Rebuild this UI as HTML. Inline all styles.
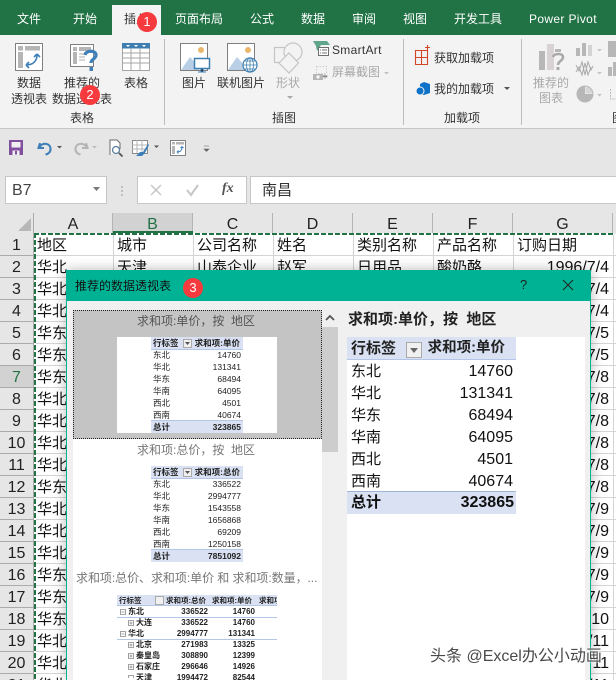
<!DOCTYPE html>
<html lang="zh-CN"><head><meta charset="utf-8"><style>
html{margin:0;padding:0;width:616px;height:680px;overflow:hidden}
body{margin:0;padding:0;width:616px;height:680px;overflow:hidden;position:relative;background:#fff;font-family:"Liberation Sans","Noto Sans CJK SC",sans-serif;color:#222}
div,span,svg{position:absolute;box-sizing:border-box}
.t{white-space:nowrap;font-size:12px;line-height:16px;color:#333}
.tab{color:#fff;top:11px}
.c{text-align:center;transform:translateX(-50%)}
.g{color:#a9a9a9}
.s{white-space:nowrap;font-size:15px;line-height:23px;color:#111}
.d{font-size:16px}
.n{font-size:16px;line-height:23px;color:#222;left:0;width:33px;text-align:center;background:#e6e6e6;border-bottom:1px solid #ababab;height:22px}
.h{font-size:16px;line-height:24px;text-align:center;top:213px;height:20px;border-right:1px solid #b4b4b4;color:#222}
.v{width:1px;top:234px;height:446px;background:#d4d4d4}
.hl{left:34px;width:582px;height:1px;background:#d4d4d4}
.bd{width:20px;height:20px;border-radius:50%;background:#f63a3d;color:#fff;font-size:13px;line-height:20px;text-align:center;font-weight:400}
.th{white-space:nowrap;font-size:8.5px;line-height:12px;color:#222}
.m{font-size:8px;font-weight:700}
.mh{font-size:7.5px;font-weight:700;line-height:13px;top:-1px}
</style></head><body>
<!-- title/tabs -->
<div style="left:0;top:0;width:616px;height:35px;background:#217346"></div>
<div style="left:112px;top:5px;width:49px;height:30px;background:#f3f3f3"></div>
<span class="t tab" style="left:17px">文件</span>
<span class="t tab" style="left:73px">开始</span>
<span class="t" style="left:124px;top:11px">插入</span>
<span class="t tab" style="left:175px">页面布局</span>
<span class="t tab" style="left:250px">公式</span>
<span class="t tab" style="left:301px">数据</span>
<span class="t tab" style="left:352px">审阅</span>
<span class="t tab" style="left:403px">视图</span>
<span class="t tab" style="left:454px">开发工具</span>
<span class="t tab" style="left:529px;letter-spacing:.35px">Power Pivot</span>
<!-- ribbon -->
<div style="left:0;top:35px;width:616px;height:94px;background:#f3f3f3;border-bottom:1px solid #c6c6c6"></div>
<div style="left:164px;top:39px;width:1px;height:86px;background:#bdbdbd"></div>
<div style="left:403px;top:39px;width:1px;height:86px;background:#bdbdbd"></div>
<div style="left:521px;top:39px;width:1px;height:86px;background:#bdbdbd"></div>

<svg style="left:0;top:36px" width="616" height="92" viewBox="0 36 616 92">
 <rect x="15.5" y="43.5" width="27" height="27" fill="#fff" stroke="#7f7f7f"/>
 <rect x="18" y="46" width="5" height="4.5" fill="#b5b5b5"/><rect x="25" y="46" width="15" height="4.5" fill="#b5b5b5"/><rect x="18" y="52" width="5" height="16" fill="#b5b5b5"/>
 <path d="M26 65c6 0 11-3 11-10M26 65l3-3M26 65l3 3M37 54l-3 3M37 54l3 3" fill="none" stroke="#3f7fb9" stroke-width="1.6"/>
 <rect x="70.5" y="44.5" width="23" height="22" fill="#fff" stroke="#7f7f7f"/>
 <rect x="73" y="47" width="4" height="4" fill="#b5b5b5"/><rect x="79" y="47" width="12" height="4" fill="#b5b5b5"/><rect x="73" y="52" width="4" height="12" fill="#b5b5b5"/><path d="M79 54h8M79 57h6M79 60h6" stroke="#c9c9c9" stroke-width="1.5"/>
 <path d="M85 55c1-5 11-5 11 0 0 4-5 4-5 8" fill="none" stroke="#3f7fb9" stroke-width="3.2"/><rect x="89.5" y="67" width="3.5" height="4" fill="#3f7fb9"/>
 <rect x="122.5" y="47" width="27" height="23.5" fill="#fff" stroke="#a5a5a5"/>
 <rect x="122" y="43" width="28" height="5.5" fill="#3f7fb0"/>
 <path d="M126 45h4l-2 2zM134 45h4l-2 2zM142 45h4l-2 2z" fill="#fff"/>
 <path d="M122 53h28M122 58h28M122 63h28M131 48v22M140 48v22" stroke="#a5a5a5"/>
 <rect x="180.5" y="43.5" width="27" height="27" fill="#fff" stroke="#7f7f7f"/>
 <circle cx="201" cy="50" r="3" fill="#e8b76b"/><path d="M181 70l9-13 7 8 2 5z" fill="#b9cfe6"/>
 <rect x="194.5" y="58.5" width="15" height="10" fill="#fff" stroke="#3f7fb0" stroke-width="1.5"/><path d="M201 69h2v3h-2zM198 72h8" stroke="#3f7fb0"/>
 <rect x="227.5" y="43.5" width="27" height="27" fill="#fff" stroke="#7f7f7f"/>
 <circle cx="248" cy="50" r="3" fill="#e8b76b"/><path d="M228 70l9-13 7 8 2 5z" fill="#b9cfe6"/>
 <circle cx="250" cy="65" r="7" fill="#fff" stroke="#3f7fb0" stroke-width="1.2"/><path d="M243 65h14M250 58v14M245 61h10M245 69h10" stroke="#3f7fb0" stroke-width=".8"/><ellipse cx="250" cy="65" rx="3.5" ry="7" fill="none" stroke="#3f7fb0" stroke-width=".8"/>
 <rect x="274.5" y="47.5" width="14" height="15" fill="none" stroke="#c4c4c4" stroke-width="1.2"/><circle cx="293" cy="52" r="9" fill="#f3f3f3" stroke="#c4c4c4" stroke-width="1.2"/>
 <path d="M289 53l9.5 10-9.5 10-10-10z" fill="#f3f3f3" stroke="#c4c4c4" stroke-width="1.2"/>
 <path d="M287 96h6l-3 3z" fill="#a9a9a9"/>
 <path d="M313 41h14l3 4h-9l-4 6-1-5z" fill="#5fa68a"/><rect x="318.5" y="47.5" width="10" height="8" fill="#fff" stroke="#6f6f6f"/><path d="M320 50h1M322 50h5M320 53h1M322 53h5" stroke="#6f6f6f"/>
 <rect x="316.5" y="66.5" width="10" height="7" fill="none" stroke="#ccc" stroke-dasharray="1.5 1.5"/>
 <path d="M313 74h10v6h-10z" fill="#b5b5b5"/><circle cx="318" cy="77" r="1.7" fill="#f3f3f3"/><path d="M323 75.5h4v1.5h-4zM325 74v5" stroke="#b5b5b5"/>
 <path d="M384 72h5l-2.5 2.500z" fill="#c0c0c0"/>
 <path d="M415.500 50.500h12v14h-12zM415.500 57.500h12M421.500 50v14M425 47.500h5M427.500 45v5" fill="none" stroke="#d24726" stroke-width="1.1"/>
 <path d="M424 82l6 2v9l-6 2-4-1v-10z" fill="#0e72c9"/><circle cx="420" cy="91" r="4" fill="#0e72c9" stroke="#f3f3f3"/>
 <path d="M504 87h6l-3 3z" fill="#555"/>
 <rect x="539" y="51" width="6" height="19" fill="#b7b7b7"/><rect x="547" y="44" width="7" height="26" fill="#d8d2d4"/><rect x="555" y="49" width="6" height="3" fill="#b7b7b7"/>
 <path d="M553 57c1-4 10-4 10 0 0 4-5 4-5 8" fill="none" stroke="#a9a9a9" stroke-width="2.6"/><rect x="556.5" y="67" width="3" height="3" fill="#a9a9a9"/>
 <rect x="576" y="48" width="4" height="8" fill="#b7b7b7"/><rect x="582" y="43" width="4" height="13" fill="#b7b7b7"/><rect x="588" y="45" width="4" height="11" fill="#d3d3d3"/>
 <path d="M597 49h5l-2.5 2.5zM597 72h5l-2.5 2.5zM597 94h5l-2.5 2.5z" fill="#c4c4c4"/>
 <path d="M576 65l3 6 3-9 3 13 3-13 3 8 2-4M576 72l3-5 3 8 3-12 3 12 3-8" fill="none" stroke="#a9a9a9"/>
 <path d="M585 86a8 8 0 1 0 8 8h-8z" fill="#b7b7b7"/><path d="M585.5 86v7.500h7.500a8 8 0 0 0-7.500-7.500z" fill="#d6d6d6"/><circle cx="585" cy="94" r="8" fill="none" stroke="#b7b7b7"/>
 <rect x="608" y="41" width="8" height="16" fill="#b7b7b7"/><rect x="608" y="67" width="4" height="9" fill="#b7b7b7"/><rect x="613" y="62" width="3" height="14" fill="#b7b7b7"/>
 <path d="M610.5 89v10h5.5" fill="none" stroke="#bcbcbc" stroke-dasharray="2 1"/>
</svg>

<span class="t c" style="left:29px;top:75px">数据</span>
<span class="t c" style="left:29px;top:91px">透视表</span>
<span class="t c" style="left:82px;top:75px">推荐的</span>
<span class="t c" style="left:82px;top:91px">数据透视表</span>
<span class="t c" style="left:136px;top:75px">表格</span>
<span class="t c" style="left:82px;top:110px">表格</span>
<span class="t c" style="left:194px;top:75px">图片</span>
<span class="t c" style="left:241px;top:75px">联机图片</span>
<span class="t c g" style="left:288px;top:75px">形状</span>
<span class="t c" style="left:284px;top:110px">插图</span>
<span class="t" style="left:332px;top:42px;letter-spacing:.3px">SmartArt</span>
<span class="t g" style="left:332px;top:64px">屏幕截图</span>
<span class="t" style="left:434px;top:50px">获取加载项</span>
<span class="t" style="left:434px;top:81px">我的加载项</span>
<span class="t c" style="left:462px;top:110px">加载项</span>
<span class="t c g" style="left:551px;top:75px">推荐的</span>
<span class="t c g" style="left:551px;top:90px">图表</span>
<span class="t" style="left:612px;top:110px">图</span>

<!-- QAT -->
<div style="left:0;top:129px;width:616px;height:85px;background:#e6e6e6"></div>
<svg style="left:0;top:130px" width="240" height="40" viewBox="0 130 240 40">
 <path d="M9 140h14v15H9z" fill="#80509f"/><rect x="11.5" y="142" width="9" height="5.5" fill="#f0f0f0"/><rect x="12.5" y="150.5" width="7" height="4.5" fill="#f0f0f0"/><rect x="15" y="151" width="2" height="3.5" fill="#80509f"/>
 <path d="M40 143l-1.500 5 5.500 0M39.500 147c3-5 11-4 11 2 0 3-2 5-5 5.500" fill="none" stroke="#3f7fb9" stroke-width="2.1"/>
 <path d="M57 146h5l-2.5 2.500z" fill="#555"/>
 <path d="M86 143l1.500 5-5.500 0M86.500 147c-3-5-11-4-11 2 0 3 2 5 5 5.500" fill="none" stroke="#b5b5b5" stroke-width="2.1"/>
 <path d="M92 146h5l-2.5 2.500z" fill="#bbb"/>
 <path d="M110 155v-15h7l3 3v6" fill="#fff" stroke="#6a6a6a"/><circle cx="116" cy="150" r="3.5" fill="#fff" stroke="#5b7f9e" stroke-width="1.3"/><path d="M119 153l3.500 3.500" stroke="#555" stroke-width="1.8"/>
 <rect x="132.5" y="140.5" width="15" height="13" fill="#fff" stroke="#8a8a8a"/><path d="M132 145h15M132 149h15M137 140v13M142 140v13" stroke="#b5b5b5"/><path d="M136 156l4-4 3 0 5-8 1 1-4 8-3 3z" fill="#3f7fb9"/>
 <path d="M154 145.500h5l-2.5 2.500z" fill="#555"/>
 <rect x="170.5" y="140.5" width="15" height="15" fill="#fff" stroke="#7f7f7f"/><rect x="172" y="142" width="3" height="2.5" fill="#b5b5b5"/><rect x="176" y="142" width="8" height="2.5" fill="#b5b5b5"/><rect x="172" y="146" width="3" height="8" fill="#b5b5b5"/><path d="M177 152c3 0 5-1 5-5M177 152l1.500-1.500M177 152l1.500 1.500M182 146.500l-1.500 1.500M182 146.500l1.500 1.500" stroke="#3f7fb9" fill="none"/>
 <path d="M204 146h5M204 149h5l-2.500 2.500z" fill="#666" stroke="#666" stroke-width=".6"/>
</svg>

<!-- formula bar -->
<div style="left:5px;top:176px;width:102px;height:28px;background:#fff;border:1px solid #c6c6c6"></div>
<span class="s d" style="left:12px;top:179px;color:#444">B7</span>
<svg style="left:0;top:170px" width="136" height="36" viewBox="0 170 136 36">
 <path d="M93 187h7l-3.500 4z" fill="#777"/>
 <path d="M122 186v2M122 190v2M122 194v2" stroke="#aaa" stroke-width="1.3"/>
</svg>
<div style="left:137px;top:176px;width:110px;height:28px;background:#fff;border:1px solid #c6c6c6"></div>
<svg style="left:137px;top:176px" width="110" height="28"><path d="M14 9l10 10M24 9l-10 10" stroke="#c6c6c6" stroke-width="1.5"/><path d="M50 14l4 5 7-10" fill="none" stroke="#c6c6c6" stroke-width="2"/></svg>
<span style="left:222px;top:181px;font:italic 700 14px 'Liberation Serif',serif;color:#555;line-height:16px">fx</span>
<div style="left:250px;top:176px;width:366px;height:28px;background:#fff;border:1px solid #c6c6c6;border-right:0"></div>
<span class="s" style="left:262px;top:179px;color:#333">南昌</span>

<!-- grid -->
<div style="left:0;top:204px;width:616px;height:10px;background:#e6e6e6"></div>
<div style="left:0;top:213px;width:616px;height:21px;background:#e6e6e6"></div>
<div style="left:0;top:233px;width:34px;height:447px;background:#e6e6e6"></div>
<svg style="left:18px;top:218px" width="14" height="14"><path d="M13 0v13H0z" fill="#b7b7b7"/></svg>
<div class="h" style="left:34px;width:79px">A</div>
<div class="h" style="left:113px;width:80px;background:#d2d2d2;color:#217346">B</div>
<div style="left:113px;top:231px;width:80px;height:2px;background:#217346"></div>
<div class="h" style="left:193px;width:80px">C</div>
<div class="h" style="left:273px;width:80px">D</div>
<div class="h" style="left:353px;width:80px">E</div>
<div class="h" style="left:433px;width:80px">F</div>
<div class="h" style="left:513px;width:100px">G</div>
<div class="v" style="left:113px"></div><div class="v" style="left:193px"></div><div class="v" style="left:273px"></div><div class="v" style="left:353px"></div><div class="v" style="left:433px"></div><div class="v" style="left:513px"></div><div class="v" style="left:613px"></div>
<div class="hl" style="top:255px"></div><div class="hl" style="top:277px"></div><div class="hl" style="top:299px"></div><div class="hl" style="top:321px"></div><div class="hl" style="top:343px"></div><div class="hl" style="top:365px"></div><div class="hl" style="top:387px"></div><div class="hl" style="top:409px"></div><div class="hl" style="top:431px"></div><div class="hl" style="top:453px"></div><div class="hl" style="top:475px"></div><div class="hl" style="top:497px"></div><div class="hl" style="top:519px"></div><div class="hl" style="top:541px"></div><div class="hl" style="top:563px"></div><div class="hl" style="top:585px"></div><div class="hl" style="top:607px"></div><div class="hl" style="top:629px"></div><div class="hl" style="top:651px"></div><div class="hl" style="top:673px"></div>

<div class="n" style="top:234px">1</div><div class="n" style="top:256px">2</div><div class="n" style="top:278px">3</div><div class="n" style="top:300px">4</div><div class="n" style="top:322px">5</div><div class="n" style="top:344px">6</div>
<div class="n" style="top:366px;background:#d2d2d2;color:#217346">7</div>
<div class="n" style="top:388px">8</div><div class="n" style="top:410px">9</div><div class="n" style="top:432px">10</div><div class="n" style="top:454px">11</div><div class="n" style="top:476px">12</div><div class="n" style="top:498px">13</div><div class="n" style="top:520px">14</div><div class="n" style="top:542px">15</div><div class="n" style="top:564px">16</div><div class="n" style="top:586px">17</div><div class="n" style="top:608px">18</div><div class="n" style="top:630px">19</div><div class="n" style="top:652px">20</div><div class="n" style="top:674px">21</div>
<div style="left:33px;top:213px;width:1px;height:467px;background:#ababab"></div>

<span class="s" style="left:37px;top:234px">地区</span>
<span class="s" style="left:117px;top:234px">城市</span>
<span class="s" style="left:197px;top:234px">公司名称</span>
<span class="s" style="left:277px;top:234px">姓名</span>
<span class="s" style="left:357px;top:234px">类别名称</span>
<span class="s" style="left:437px;top:234px">产品名称</span>
<span class="s" style="left:517px;top:234px">订购日期</span>
<span class="s" style="left:37px;top:256px">华北</span>
<span class="s" style="left:117px;top:256px">天津</span>
<span class="s" style="left:197px;top:256px">山泰企业</span>
<span class="s" style="left:277px;top:256px">赵军</span>
<span class="s" style="left:357px;top:256px">日用品</span>
<span class="s" style="left:437px;top:256px">酸奶酪</span>
<span class="s d" style="right:7px;top:256px">1996/7/4</span>
<span class="s" style="left:37px;top:278px">华北</span><span class="s" style="left:37px;top:300px">华北</span><span class="s" style="left:37px;top:322px">华东</span><span class="s" style="left:37px;top:344px">华东</span><span class="s" style="left:37px;top:366px">华东</span><span class="s" style="left:37px;top:388px">华北</span><span class="s" style="left:37px;top:410px">华北</span><span class="s" style="left:37px;top:432px">华北</span><span class="s" style="left:37px;top:454px">华北</span><span class="s" style="left:37px;top:476px">华东</span><span class="s" style="left:37px;top:498px">华北</span><span class="s" style="left:37px;top:520px">华北</span><span class="s" style="left:37px;top:542px">华北</span><span class="s" style="left:37px;top:564px">华东</span><span class="s" style="left:37px;top:586px">华东</span><span class="s" style="left:37px;top:608px">华东</span><span class="s" style="left:37px;top:630px">华北</span><span class="s" style="left:37px;top:652px">华北</span><span class="s" style="left:37px;top:674px">华北</span>

<span class="s d" style="right:7px;top:278px">1996/7/4</span><span class="s d" style="right:7px;top:300px">1996/7/4</span><span class="s d" style="right:7px;top:322px">1996/7/5</span><span class="s d" style="right:7px;top:344px">1996/7/5</span><span class="s d" style="right:7px;top:366px">1996/7/8</span><span class="s d" style="right:7px;top:388px">1996/7/8</span><span class="s d" style="right:7px;top:410px">1996/7/8</span><span class="s d" style="right:7px;top:432px">1996/7/8</span><span class="s d" style="right:7px;top:454px">1996/7/8</span><span class="s d" style="right:7px;top:476px">1996/7/8</span><span class="s d" style="right:7px;top:498px">1996/7/9</span><span class="s d" style="right:7px;top:520px">1996/7/9</span><span class="s d" style="right:7px;top:542px">1996/7/9</span><span class="s d" style="right:7px;top:564px">1996/7/9</span><span class="s d" style="right:7px;top:586px">1996/7/9</span><span class="s d" style="right:7px;top:608px">1996/7/10</span><span class="s d" style="right:7px;top:630px">1996/7/11</span><span class="s d" style="right:7px;top:652px">1996/7/11</span><span class="s d" style="right:7px;top:674px">1996/7/11</span>

<!-- marching ants -->
<div style="left:34px;top:233px;width:580px;height:2px;background:repeating-linear-gradient(90deg,#217346 0 5px,#fff 5px 7px)"></div>
<div style="left:34px;top:233px;width:2px;height:447px;background:repeating-linear-gradient(180deg,#217346 0 5px,#fff 5px 7px)"></div>

<!-- dialog -->
<div style="left:66px;top:270px;width:525px;height:410px;background:#f0f0f0;border:1px solid #00b294;border-bottom:0;box-shadow:0 0 12px rgba(0,0,0,.28)"></div>
<div style="left:66px;top:270px;width:525px;height:31px;background:#00b294"></div>
<span class="t" style="left:75px;top:278px;color:#111">推荐的数据透视表</span>
<span style="left:520px;top:277px;font-size:13px;line-height:16px;color:#222">?</span>
<svg style="left:562px;top:279px" width="12" height="12"><path d="M1 1l10 10M11 1L1 11" stroke="#222" stroke-width="1"/></svg>

<!-- list -->
<div style="left:73px;top:310px;width:249px;height:370px;background:#fff"></div>
<div style="left:322px;top:310px;width:17px;height:370px;background:#f0f0f0"></div>
<div style="left:322px;top:327px;width:16px;height:125px;background:#cdcdcd"></div>
<svg style="left:325px;top:314px" width="10" height="8"><path d="M1 6l4-4 4 4" fill="none" stroke="#555" stroke-width="1.8"/></svg>
<div style="left:73px;top:310px;width:249px;height:129px;background:#c4c4c4;border:1px dotted #222"></div>
<span class="t c" style="left:196px;top:313px;color:#555">求和项:单价，按&nbsp; 地区</span>
<div style="left:117px;top:337px;width:160px;height:96px;background:#fff"></div>

<div style="left:151px;top:337px;width:92px;height:13px;background:#d9e1f2;border-bottom:1px solid #b4c6e7"></div>
<span class="th" style="left:153px;top:337px;font-weight:700">行标签</span>
<div style="left:183px;top:339px;width:9px;height:9px;background:#f0f0f0;border:1px solid #aaa"></div>
<svg style="left:185px;top:342px" width="5" height="3"><path d="M0 0h5l-2.5 3z" fill="#555"/></svg>
<span class="th" style="right:376px;top:337px;font-weight:700">求和项:单价</span>
<span class="th" style="left:153px;top:349px">东北</span><span class="th" style="right:375px;top:349px">14760</span>
<span class="th" style="left:153px;top:361px">华北</span><span class="th" style="right:375px;top:361px">131341</span>
<span class="th" style="left:153px;top:373px">华东</span><span class="th" style="right:375px;top:373px">68494</span>
<span class="th" style="left:153px;top:385px">华南</span><span class="th" style="right:375px;top:385px">64095</span>
<span class="th" style="left:153px;top:397px">西北</span><span class="th" style="right:375px;top:397px">4501</span>
<span class="th" style="left:153px;top:409px">西南</span><span class="th" style="right:375px;top:409px">40674</span>
<div style="left:151px;top:420px;width:92px;height:13px;background:#d9e1f2;border-top:1px solid #b4c6e7"></div>
<span class="th" style="left:153px;top:421px;font-weight:700">总计</span><span class="th" style="right:375px;top:421px;font-weight:700">323865</span>

<span class="t c" style="left:196px;top:442px;color:#777">求和项:总价，按&nbsp; 地区</span>
<div style="left:151px;top:466px;width:92px;height:13px;background:#d9e1f2;border-bottom:1px solid #b4c6e7"></div>
<span class="th" style="left:153px;top:466px;font-weight:700">行标签</span>
<div style="left:183px;top:468px;width:9px;height:9px;background:#f0f0f0;border:1px solid #aaa"></div>
<svg style="left:185px;top:471px" width="5" height="3"><path d="M0 0h5l-2.5 3z" fill="#555"/></svg>
<span class="th" style="right:376px;top:466px;font-weight:700">求和项:总价</span>
<span class="th" style="left:153px;top:478px">东北</span><span class="th" style="right:375px;top:478px">336522</span>
<span class="th" style="left:153px;top:490px">华北</span><span class="th" style="right:375px;top:490px">2994777</span>
<span class="th" style="left:153px;top:502px">华东</span><span class="th" style="right:375px;top:502px">1543558</span>
<span class="th" style="left:153px;top:514px">华南</span><span class="th" style="right:375px;top:514px">1656868</span>
<span class="th" style="left:153px;top:526px">西北</span><span class="th" style="right:375px;top:526px">69209</span>
<span class="th" style="left:153px;top:538px">西南</span><span class="th" style="right:375px;top:538px">1250158</span>
<div style="left:151px;top:549px;width:92px;height:13px;background:#d9e1f2;border-top:1px solid #b4c6e7"></div>
<span class="th" style="left:153px;top:550px;font-weight:700">总计</span><span class="th" style="right:375px;top:550px;font-weight:700">7851092</span>

<span class="t" style="left:76px;top:570px;color:#777;letter-spacing:-.05px">求和项:总价、求和项:单价 和 求和项:数量，...</span>

<div style="left:117px;top:595px;width:160px;height:85px;overflow:hidden;background:#fff">
 <div style="left:0;top:0;width:160px;height:11px;background:#d9e1f2;border-bottom:1px solid #b4c6e7"></div>
 <span class="th mh" style="left:2px">行标签</span>
 <div style="left:38px;top:1px;width:9px;height:9px;background:#f0f0f0;border:1px solid #aaa"></div>
 <span class="th mh" style="left:49px">求和项:总价</span>
 <span class="th mh" style="left:95px">求和项:单价</span>
 <span class="th mh" style="left:142px">求和项:数量</span>
 <span class="th m" style="left:11px;top:11px">东北</span><span class="th m" style="right:69px;top:11px">336522</span><span class="th m" style="right:22px;top:11px">14760</span>
 <div style="left:0;top:22px;width:160px;height:1px;background:#b4c6e7"></div>
 <span class="th m" style="left:19px;top:22px">大连</span><span class="th m" style="right:69px;top:22px">336522</span><span class="th m" style="right:22px;top:22px">14760</span>
 <span class="th m" style="left:11px;top:33px">华北</span><span class="th m" style="right:69px;top:33px">2994777</span><span class="th m" style="right:22px;top:33px">131341</span>
 <div style="left:0;top:44px;width:160px;height:1px;background:#b4c6e7"></div>
 <span class="th m" style="left:19px;top:44px">北京</span><span class="th m" style="right:69px;top:44px">271983</span><span class="th m" style="right:22px;top:44px">13325</span>
 <span class="th m" style="left:19px;top:55px">秦皇岛</span><span class="th m" style="right:69px;top:55px">308890</span><span class="th m" style="right:22px;top:55px">12399</span>
 <span class="th m" style="left:19px;top:66px">石家庄</span><span class="th m" style="right:69px;top:66px">296646</span><span class="th m" style="right:22px;top:66px">14926</span>
 <span class="th m" style="left:19px;top:77px">天津</span><span class="th m" style="right:69px;top:77px">1994472</span><span class="th m" style="right:22px;top:77px">82544</span>
 <svg style="left:3px;top:13px" width="15" height="70" fill="none" stroke="#888" stroke-width=".8">
  <path d="M.5 1.5h5v5h-5zM1.5 4h3M8.5 12.5h5v5h-5zM9.5 15h3M11 13.5v3M.5 23.5h5v5h-5zM1.5 26h3M8.5 34.5h5v5h-5zM9.5 37h3M11 35.5v3M8.5 45.5h5v5h-5zM9.5 48h3M11 46.5v3M8.5 56.5h5v5h-5zM9.5 59h3M11 57.5v3M8.5 67.5h5v5h-5z"/>
 </svg>
</div>

<!-- preview -->
<span style="left:348px;top:311px;white-space:nowrap;font-size:15px;line-height:18px;font-weight:700;color:#222">求和项:单价，按&nbsp; 地区</span>
<div style="left:347px;top:337px;width:238px;height:343px;background:#fff"></div>
<div style="left:347px;top:337px;width:169px;height:23px;background:#d9e1f2;border-bottom:1px solid #b4c6e7"></div>
<span class="s" style="left:351px;top:337px;font-weight:700;color:#222">行标签</span>
<div style="left:406px;top:342px;width:16px;height:16px;background:#f0f0f0;border:1px solid #aaa"></div>
<svg style="left:410px;top:348px" width="8" height="5"><path d="M0 0h8l-4 5z" fill="#666"/></svg>
<span class="s" style="right:111px;top:337px;font-weight:700;color:#222;font-size:14.5px">求和项:单价</span>
<span class="s" style="left:351px;top:360px">东北</span><span class="s d" style="right:103px;top:360px">14760</span>
<span class="s" style="left:351px;top:382px">华北</span><span class="s d" style="right:103px;top:382px">131341</span>
<span class="s" style="left:351px;top:404px">华东</span><span class="s d" style="right:103px;top:404px">68494</span>
<span class="s" style="left:351px;top:426px">华南</span><span class="s d" style="right:103px;top:426px">64095</span>
<span class="s" style="left:351px;top:448px">西北</span><span class="s d" style="right:103px;top:448px">4501</span>
<span class="s" style="left:351px;top:470px">西南</span><span class="s d" style="right:103px;top:470px">40674</span>
<div style="left:347px;top:491px;width:169px;height:23px;background:#d9e1f2;border-top:1px solid #a0b4d8"></div>
<span class="s" style="left:351px;top:491px;font-weight:700">总计</span><span class="s d" style="right:102px;top:491px;font-weight:700">323865</span>

<!-- badges -->
<div class="bd" style="left:137px;top:12px">1</div>
<div class="bd" style="left:80px;top:85px">2</div>
<div class="bd" style="left:183px;top:278px">3</div>

<!-- watermark -->
<span style="left:430px;top:648px;white-space:nowrap;font-size:16px;line-height:18px;color:#4a4a4a;text-shadow:0 0 2px #fff,0 0 2px #fff">头条 @Excel办公小动画</span>
</body></html>
